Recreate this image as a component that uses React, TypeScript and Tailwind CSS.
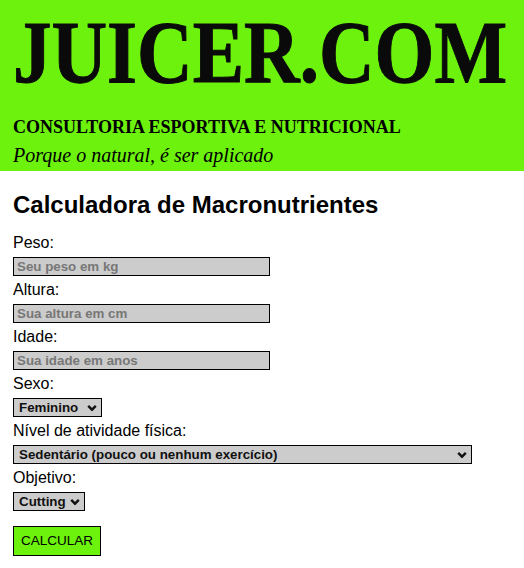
import { useState } from "react";

const serif = "font-['Liberation_Serif','Times_New_Roman',serif]";

function Chevron() {
  return (
    <svg
      width="10"
      height="7"
      viewBox="0 0 10 7"
      className="pointer-events-none absolute right-[5px] top-1/2 -translate-y-1/2"
    >
      <path d="M1.2 1.4 L5 5.2 L8.8 1.4" fill="none" stroke="#111" strokeWidth="2.4" />
    </svg>
  );
}

function Field({ label, placeholder }: { label: string; placeholder: string }) {
  return (
    <>
      <label className="block text-[16px] leading-[19px]">{label}</label>
      <input
        type="number"
        placeholder={placeholder}
        className="mt-[5px] mb-[4px] block h-[19px] w-[257px] border border-black bg-[#cccccc] px-[3px] text-[13.33px] font-bold text-[#111] outline-none placeholder:text-[#777777]"
      />
    </>
  );
}

function Select({
  label,
  width,
  options,
}: {
  label: string;
  width: string;
  options: string[];
}) {
  const [value, setValue] = useState(options[0]);
  return (
    <>
      <label className="block text-[16px] leading-[19px]">{label}</label>
      <div className={`relative mt-[5px] mb-[4px] h-[19px] ${width}`}>
        <select
          value={value}
          onChange={(e) => setValue(e.target.value)}
          className="block h-full w-full appearance-none border border-black bg-[#cccccc] pl-[5px] text-[13.33px] leading-[17px] font-bold text-[#111] outline-none"
        >
          {options.map((o) => (
            <option key={o}>{o}</option>
          ))}
        </select>
        <Chevron />
      </div>
    </>
  );
}

export default function App() {
  return (
    <div className="min-h-screen bg-white font-['Liberation_Sans',Arial,sans-serif] text-black">
      {/* Header */}
      <header className="flex h-[171px] flex-col bg-[#6cf20d] px-[13px]">
        <h1
          className={`${serif} origin-left scale-x-[0.875] pt-[9px] text-[88px] leading-[88px] font-bold whitespace-nowrap text-[#0a0a0a] [-webkit-text-stroke:1px_#0a0a0a]`}
        >
          JUICER.COM
        </h1>
        <h3 className={`${serif} mt-[18px] text-[18px] leading-[24px] font-bold`}>
          CONSULTORIA ESPORTIVA E NUTRICIONAL
        </h3>
        <p className={`${serif} mt-[4px] text-[20px] leading-[24px] italic`}>
          Porque o natural, é ser aplicado
        </p>
      </header>

      {/* Calculadora */}
      <main className="px-[13px]">
        <h2 className="mt-[20px] mb-[14px] text-[24px] leading-[28px] font-bold">
          Calculadora de Macronutrientes
        </h2>
        <form onSubmit={(e) => e.preventDefault()}>
          <Field label="Peso:" placeholder="Seu peso em kg" />
          <Field label="Altura:" placeholder="Sua altura em cm" />
          <Field label="Idade:" placeholder="Sua idade em anos" />
          <Select label="Sexo:" width="w-[89px]" options={["Feminino", "Masculino"]} />
          <Select
            label="Nível de atividade física:"
            width="w-[459px]"
            options={[
              "Sedentário (pouco ou nenhum exercício)",
              "Levemente ativo (1-3 dias por semana)",
              "Moderadamente ativo (3-5 dias por semana)",
              "Muito ativo (6-7 dias por semana)",
            ]}
          />
          <Select
            label="Objetivo:"
            width="w-[72px]"
            options={["Cutting", "Manutenção", "Bulking"]}
          />
          <button
            type="submit"
            className="mt-[11px] h-[30px] w-[88px] border border-black bg-[#6cf20d] text-[13.5px] text-black"
          >
            CALCULAR
          </button>
        </form>
      </main>
    </div>
  );
}
